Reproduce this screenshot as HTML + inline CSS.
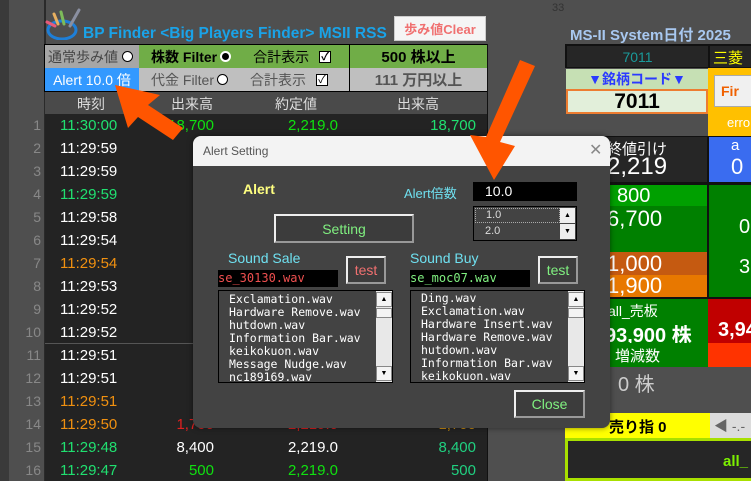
<!DOCTYPE html><html><head><meta charset="utf-8"><style>
body{margin:0;width:751px;height:481px;overflow:hidden;background:#4f4f4f;font-family:"Liberation Sans","Noto Sans CJK JP",sans-serif;position:relative}
div,span{position:absolute;box-sizing:border-box}
.c{display:flex;align-items:center;justify-content:center}
.r{text-align:right}
.t{font-size:15px}
.lb{font-family:"DejaVu Sans Mono","Liberation Mono",monospace;font-size:11.5px;color:#fff;line-height:13px;white-space:pre}
.btn{border:2px solid;border-color:#eee #999 #999 #eee;background:#3c3c3c}
</style></head><body>
<div style="left:0;top:0;width:9px;height:481px;background:#3a3a3a"></div>
<div style="left:44px;top:0;width:2px;height:481px;background:#2a2a2a"></div>
<div style="top:2px;font-size:11px;color:#333;left:552px">33</div>
<svg style="position:absolute;left:44px;top:8px" width="40" height="32"><ellipse cx="18" cy="22" rx="14" ry="9" fill="none" stroke="#1e7fd8" stroke-width="3"/><line x1="3" y1="14" x2="11" y2="18" stroke="#e85a7a" stroke-width="3" stroke-linecap="round"/><line x1="10" y1="6" x2="14" y2="16" stroke="#e7b060" stroke-width="3" stroke-linecap="round"/><line x1="17" y1="4" x2="20" y2="16" stroke="#7dbb5a" stroke-width="3" stroke-linecap="round"/><line x1="35" y1="2" x2="26" y2="18" stroke="#8a8fa0" stroke-width="3" stroke-linecap="round"/></svg>
<div style="left:83px;top:25px;font-size:15.5px;font-weight:bold;color:#1aa3e8;white-space:nowrap">BP Finder &lt;Big Players Finder&gt; MSII RSS</div>
<div class="c" style="left:394px;top:16px;width:92px;height:25px;background:#f5f5f5;border:1px solid #ccc;color:#f07070;font-weight:bold;font-size:13px">歩み値Clear</div>
<div style="left:44px;top:44px;width:444px;height:48px;background:#000"></div>
<div class="c" style="left:45px;top:45px;width:94px;height:23px;background:#a6a6a6;color:#444;font-size:14px;justify-content:flex-start;padding-left:3px">通常歩み値 <span style="position:static;display:inline-block;width:11px;height:11px;border-radius:50%;background:#fff;border:1px solid #000;margin-left:4px"></span></div>
<div class="c" style="left:139px;top:45px;width:210px;height:23px;background:#70ad47;color:#000;font-size:14px;font-weight:bold;justify-content:flex-start;padding-left:12px">株数 Filter<span style="position:static;display:inline-block;width:11px;height:11px;border-radius:50%;background:#000;border:2px solid #fff;margin-left:3px"></span><span style="position:static;margin-left:22px;font-weight:normal">合計表示</span><span style="position:static;display:inline-block;width:12px;height:12px;background:#fff;border:1px solid #000;margin-left:10px;font-size:11px;line-height:10px;text-align:center">✓</span></div>
<div class="c" style="left:350px;top:45px;width:137px;height:23px;background:#70ad47;color:#000;font-size:15px;font-weight:bold">500 株以上</div>
<div class="c" style="left:45px;top:68px;width:94px;height:23px;background:#3399ff;color:#fff;font-size:14px">Alert 10.0 倍</div>
<div class="c" style="left:139px;top:68px;width:210px;height:23px;background:#bfbfbf;color:#555;font-size:14px;justify-content:flex-start;padding-left:12px">代金 Filter<span style="position:static;display:inline-block;width:11px;height:11px;border-radius:50%;background:#fff;border:1px solid #000;margin-left:3px"></span><span style="position:static;margin-left:22px">合計表示</span><span style="position:static;display:inline-block;width:12px;height:12px;background:#fff;border:1px solid #000;margin-left:10px;font-size:11px;line-height:10px;text-align:center;color:#000">✓</span></div>
<div class="c" style="left:350px;top:68px;width:137px;height:23px;background:#bfbfbf;color:#555;font-size:15px;font-weight:bold">111 万円以上</div>
<div style="left:45px;top:92px;width:443px;height:22px;background:#4a4a4a;color:#ddd;font-size:14px">
<span style="left:32px;top:2px">時刻</span><span style="left:126px;top:2px">出来高</span><span style="left:230px;top:2px">約定値</span><span style="left:352px;top:2px">出来高</span></div>
<div style="left:45px;top:114px;width:443px;height:367px;background:#232323"></div>
<div style="left:45px;top:343px;width:443px;height:1px;background:#555"></div>
<div style="left:487px;top:44px;width:1px;height:437px;background:#111"></div>
<div id="rows"></div>
<div style="left:570px;top:24px;font-size:15px;font-weight:bold;color:#a8c8f0">MS-II System日付 2025</div>
<div style="left:565px;top:44px;width:186px;height:24px;background:#111"></div>
<div class="c" style="left:567px;top:46px;width:141px;height:21px;background:#262626;color:#1a9a9a;font-size:14px">7011</div>
<div style="left:710px;top:46px;width:41px;height:21px;background:#262626;color:#ff0;font-size:15px;padding:1px 0 0 3px">三菱</div>
<div class="c" style="left:566px;top:69px;width:142px;height:22px;background:#c6e0b4;color:#2a3aff;font-size:14px;font-weight:bold;border-bottom:2px solid #ed7d31">▼銘柄コード▼</div>
<div class="c" style="left:566px;top:91px;width:142px;height:23px;background:#e2efda;color:#000;font-size:21px;font-weight:bold;border:2px solid #ed7d31;border-top:0">7011</div>
<div style="left:708px;top:68px;width:43px;height:68px;background:#ffc000"></div>
<div style="left:714px;top:75px;width:40px;height:32px;background:#f0f0f0;border:1px solid #aaa;color:#f06000;font-weight:bold;font-size:14px;padding:7px 0 0 6px">Fir</div>
<div style="left:727px;top:115px;color:#fff;font-size:13px">erro</div>
<div style="left:565px;top:136px;width:186px;height:48px;background:#111"></div>
<div style="left:567px;top:137px;width:140px;height:45px;background:#262626;color:#fff"><span style="left:40px;top:1px;font-size:15px">終値引け</span><span style="left:40px;top:16px;font-size:24px">2,219</span></div>
<div style="left:709px;top:137px;width:42px;height:45px;background:#3a6cf0;color:#fff;font-size:15px;padding-left:22px">a<br><span style="position:static;font-size:22px">0</span></div>
<div style="left:565px;top:184px;width:186px;height:115px;background:#111"></div>
<div style="left:567px;top:185px;width:140px;height:21px;background:#00a000;color:#fff;font-size:20px;padding-left:50px">800</div>
<div style="left:567px;top:206px;width:140px;height:46px;background:#008000;color:#fff;font-size:22px;padding-left:40px">6,700</div>
<div style="left:567px;top:252px;width:140px;height:23px;background:#c55a11;color:#fff;font-size:22px;padding-left:40px;line-height:23px">1,000</div>
<div style="left:567px;top:275px;width:140px;height:22px;background:#e87800;color:#fff;font-size:22px;padding-left:40px;line-height:22px">1,900</div>
<div style="left:709px;top:185px;width:42px;height:112px;background:#008000;color:#fff;font-size:20px;padding:22px 0 0 30px;line-height:40px">0<br>3</div>
<div style="left:565px;top:299px;width:143px;height:44px;background:#008000;color:#fff"><span style="left:43px;top:2px;font-size:14px">all_売板</span><span style="left:40px;top:20px;font-size:20px;font-weight:bold">93,900 株</span></div>
<div style="left:708px;top:299px;width:43px;height:44px;background:#c00000;color:#fff;font-size:20px;font-weight:bold;padding:20px 0 0 10px">3,94</div>
<div style="left:565px;top:343px;width:143px;height:24px;background:#008000;color:#fff;font-size:15px;padding:2px 0 0 50px">増減数</div>
<div style="left:708px;top:343px;width:43px;height:24px;background:#ff3300"></div>
<div style="left:565px;top:367px;width:186px;height:46px;background:#4f4f4f;color:#ccc;font-size:20px;padding:1px 0 0 53px">0 株</div>
<div style="left:565px;top:413px;width:145px;height:25px;background:#ffff00;color:#000;font-size:15px;font-weight:bold;padding:3px 0 0 44px">売り指 0</div>
<div style="left:710px;top:413px;width:41px;height:25px;background:#dcdcdc;color:#666;font-size:14px;padding:3px 0 0 4px">◀ -.-</div>
<div style="left:565px;top:438px;width:186px;height:43px;background:#262626;border:3px solid #a8e000;border-right:0"><span style="left:155px;top:12px;color:#7cf000;font-weight:bold;font-size:15px">all_</span></div>
<div style="left:193px;top:136px;width:417px;height:292px;background:#434343;border-radius:8px;overflow:hidden;box-shadow:0 0 6px rgba(0,0,0,.5)">
<div style="left:0;top:0;width:417px;height:30px;background:#f3f3f3;color:#555;font-size:12px;padding:8px 0 0 10px">Alert Setting<span style="left:396px;top:4px;font-size:16px;color:#888">✕</span></div>
<div style="left:50px;top:45px;color:#ffff80;font-weight:bold;font-size:14px">Alert</div>
<div style="left:211px;top:47px;color:#6fe0f0;font-size:13px">Alert倍数</div>
<div style="left:280px;top:46px;width:104px;height:19px;background:#000;color:#fff;font-size:14px;padding:1px 0 0 12px">10.0</div>
<div style="left:280px;top:70px;width:104px;height:35px;border:1px solid #000;color:#ddd;font-size:11px"><span style="left:1px;top:1px;width:85px;height:15px;border:1px dotted #aaa;padding-left:10px">1.0</span><span style="left:11px;top:18px">2.0</span><span style="left:86px;top:1px;width:15px;height:15px;background:#eee;font-size:7px;color:#000;text-align:center;line-height:15px">▲</span><span style="left:86px;top:17px;width:15px;height:15px;background:#eee;font-size:7px;color:#000;text-align:center;line-height:15px">▼</span></div>
<div class="btn c" style="left:81px;top:78px;width:140px;height:29px;color:#80f080;font-size:14px">Setting</div>
<div style="left:35px;top:114px;color:#6fe0f0;font-size:14px">Sound Sale</div>
<div style="left:217px;top:114px;color:#6fe0f0;font-size:14px">Sound Buy</div>
<div class="btn c" style="left:153px;top:120px;width:40px;height:28px;color:#f07070;font-size:14px">test</div>
<div class="btn c" style="left:345px;top:120px;width:40px;height:28px;color:#80f080;font-size:14px">test</div>
<div style="left:25px;top:134px;width:120px;height:17px;background:#000;color:#f05050;font-size:12px;font-family:'DejaVu Sans Mono',monospace;padding-top:1px">se_30130.wav</div>
<div style="left:217px;top:134px;width:120px;height:17px;background:#000;color:#80f080;font-size:12px;font-family:'DejaVu Sans Mono',monospace;padding-top:1px">se_moc07.wav</div>
<div style="left:25px;top:154px;width:175px;height:93px;border:1px solid #000"><div class="lb" style="left:10px;top:2px">Exclamation.wav
Hardware Remove.wav
hutdown.wav
Information Bar.wav
keikokuon.wav
Message Nudge.wav
nc189169.wav</div><span style="left:157px;top:0;width:16px;height:91px;background:#e8e8e8"></span><span style="left:157px;top:1px;width:16px;height:15px;background:#f4f4f4;border:1px solid #888;font-size:7px;text-align:center;line-height:13px">▲</span><span style="left:157px;top:17px;width:16px;height:10px;background:#f4f4f4;border:1px solid #888"></span><span style="left:157px;top:75px;width:16px;height:15px;background:#f4f4f4;border:1px solid #888;font-size:7px;text-align:center;line-height:13px">▼</span></div>
<div style="left:217px;top:154px;width:175px;height:93px;border:1px solid #000"><div class="lb" style="left:10px;top:1px">Ding.wav
Exclamation.wav
Hardware Insert.wav
Hardware Remove.wav
hutdown.wav
Information Bar.wav
keikokuon.wav</div><span style="left:157px;top:0;width:16px;height:91px;background:#e8e8e8"></span><span style="left:157px;top:1px;width:16px;height:15px;background:#f4f4f4;border:1px solid #888;font-size:7px;text-align:center;line-height:13px">▲</span><span style="left:157px;top:17px;width:16px;height:10px;background:#f4f4f4;border:1px solid #888"></span><span style="left:157px;top:75px;width:16px;height:15px;background:#f4f4f4;border:1px solid #888;font-size:7px;text-align:center;line-height:13px">▼</span></div>
<div class="btn c" style="left:321px;top:254px;width:71px;height:28px;color:#80f080;font-size:14px">Close</div>
</div>
<svg style="position:absolute;left:0;top:0" width="751" height="481"><polygon points="115,85 160,95 148,105 183,128 173,140 138,117 128,128" fill="#ff5500"/><polygon points="494,180 470,135 486,137 520,60 535,66 500,142 515,146" fill="#ff5500"/></svg>
<script>
var d=[["11:30:00","#20e070","18,700","#10e010","2,219.0","#10e010","18,700","#20e070"],
["11:29:59","#fff"],["11:29:59","#fff"],["11:29:59","#20e070"],["11:29:58","#fff"],["11:29:54","#fff"],["11:29:54","#f09010"],["11:29:53","#fff"],["11:29:52","#fff"],["11:29:52","#fff"],["11:29:51","#fff"],["11:29:51","#fff"],["11:29:51","#f09010"],["11:29:50","#f09010","1,700","#e02020","2,219.0","#e02020","1,700","#d09010"],
["11:29:48","#20e070","8,400","#fff","2,219.0","#fff","8,400","#20d080"],["11:29:47","#20e070","500","#10e010","2,219.0","#10e010","500","#20d080"]];
var h="";d.forEach(function(r,i){var y=115+i*23;h+='<div class="t" style="left:0;top:'+(y+2)+'px;width:41px;text-align:right;color:#888;font-size:14px">'+(i+1)+'</div><div class="t" style="left:60px;top:'+(y+2)+'px;color:'+r[1]+'">'+r[0]+'</div>';if(r[2]){h+='<div class="t r" style="left:120px;width:94px;top:'+(y+2)+'px;color:'+r[3]+'">'+r[2]+'</div><div class="t r" style="left:240px;width:98px;top:'+(y+2)+'px;color:'+r[5]+'">'+r[4]+'</div><div class="t r" style="left:380px;width:96px;top:'+(y+2)+'px;color:'+r[7]+'">'+r[6]+'</div>';}});
document.getElementById("rows").outerHTML=h;
</script>
</body></html>
